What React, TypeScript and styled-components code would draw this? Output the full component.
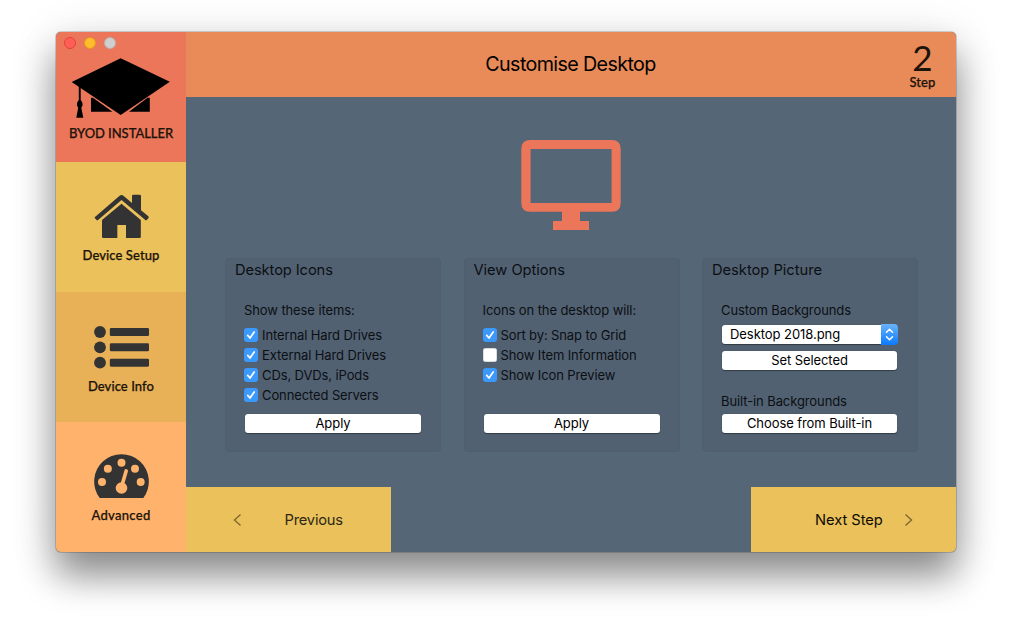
import React from "react";
import styled, { createGlobalStyle } from "styled-components";

const GlobalStyle = createGlobalStyle`
  * { box-sizing: border-box; }
  body { margin: 0; background: #fff; font-family: Inter, "Liberation Sans", sans-serif; color: #0b0f14; }
  button { font: inherit; color: inherit; border: 0; padding: 0; }
`;

const Desktop = styled.div`
  height: 632px;
  padding: 32px 56px 80px;
  overflow: hidden;
`;

const Window = styled.div`
  display: flex;
  width: 900px;
  height: 520px;
  border-radius: 5px;
  overflow: hidden;
  background: #556677;
  box-shadow: 0 0 0 1px rgba(0, 0, 0, 0.16), 0 24px 36px rgba(0, 0, 0, 0.4), 0 8px 50px rgba(0, 0, 0, 0.14);
`;

const Sidebar = styled.nav`
  display: flex;
  flex-direction: column;
  width: 130px;
`;

const Brand = styled.div`
  height: 130px;
  background: #eb765a;
`;

const Lights = styled.div`
  display: flex;
  gap: 8px;
  padding: 5px 0 0 8px;
  height: 26px;
`;

const Light = styled.span<{ $fill: string; $edge: string }>`
  width: 12px;
  height: 12px;
  border-radius: 50%;
  background: ${(p) => p.$fill};
  border: 1px solid ${(p) => p.$edge};
`;

const CapIcon = styled.svg`
  display: block;
  width: 100px;
  height: 62px;
  margin-left: 15px;
`;

const Futura = styled.div<{ $spacing: number }>`
  font-family: Lato, sans-serif;
  font-weight: 500;
  font-size: 13px;
  line-height: 16px;
  text-align: center;
  white-space: nowrap;
  color: #1c130a;
  -webkit-text-stroke: 0.25px #1c130a;
  letter-spacing: ${(p) => p.$spacing}px;
`;

const BrandName = styled(Futura)`
  margin-top: 5px;
`;

const NavItem = styled.div<{ $bg: string; $gap: number }>`
  height: 130px;
  padding-top: 32px;
  background: ${(p) => p.$bg};
  svg {
    display: block;
    width: 56px;
    height: 45px;
    margin: 0 0 ${(p) => p.$gap}px 38px;
    fill: #333;
  }
`;

const Main = styled.main`
  display: flex;
  flex-direction: column;
  width: 770px;
`;

const Header = styled.header`
  display: grid;
  grid-template-columns: 66px 1fr 67px;
  height: 65px;
  background: #e88b59;
`;

const Title = styled.h1`
  grid-column: 2;
  margin: 0;
  font-size: 19.7px;
  font-weight: 400;
  line-height: 64px;
  text-align: center;
  letter-spacing: -0.62px;
  color: #000;
`;

const Step = styled.div`
  padding-top: 10px;
`;

const StepNumber = styled.div`
  font-family: Lato, sans-serif;
  font-size: 35px;
  line-height: 30px;
  height: 32px;
  text-align: center;
  color: #1c130a;
`;

const Content = styled.section`
  height: 390px;
  padding: 43px 38px 0 39px;
`;

const MonitorIcon = styled.svg`
  display: block;
  width: 100px;
  height: 90px;
  margin: 0 auto 28px 296px;
  fill: #eb765a;
`;

const Panels = styled.div`
  display: flex;
  justify-content: space-between;
`;

const Panel = styled.div`
  width: 216px;
  height: 194px;
  padding: 0 19px;
  border: 1px solid #4f5f6f;
  border-radius: 4px;
  background: #526171;
`;

const PanelTitle = styled.h2<{ $spacing: number }>`
  margin: 1px 0 0 -10px;
  height: 40px;
  font-size: 14.7px;
  font-weight: 400;
  line-height: 20px;
  white-space: nowrap;
  letter-spacing: ${(p) => p.$spacing}px;
`;

const Caption = styled.div`
  font-size: 13px;
  line-height: 20px;
  margin-left: -1px;
  white-space: nowrap;
  letter-spacing: -0.1px;
`;

const Options = styled.div`
  height: 94px;
  padding-top: 5px;
`;

const Option = styled.label`
  display: flex;
  align-items: center;
  gap: 4px;
  height: 20px;
  margin-left: -1px;
`;

const OptionText = styled.span`
  font-size: 13px;
  line-height: 20px;
  white-space: nowrap;
  letter-spacing: -0.11px;
`;

const Box = styled.span<{ $on: boolean }>`
  display: block;
  width: 14px;
  height: 14px;
  border-radius: 3px;
  background: ${(p) => (p.$on ? "#3b99fc" : "#fff")};
  box-shadow: ${(p) => (p.$on ? "none" : "inset 0 0 0 0.5px #b5bac0")};
  svg { display: block; }
`;

const Button = styled.button<{ $width?: number }>`
  display: block;
  width: ${(p) => p.$width ?? 176}px;
  height: 19px;
  border-radius: 3px;
  background: #fff;
  color: #000;
  font-size: 13px;
  line-height: 19px;
  text-align: center;
  letter-spacing: -0.08px;
  box-shadow: 0 0.5px 1px rgba(0, 0, 0, 0.4);
`;

const PictureControls = styled.div`
  display: flex;
  flex-direction: column;
  padding-top: 4px;
  height: 71px;
`;

const Select = styled.div`
  display: flex;
  justify-content: space-between;
  align-items: center;
  width: 176px;
  height: 21px;
  margin-bottom: 6px;
`;

const SelectValue = styled.span`
  width: 159px;
  height: 19px;
  padding-left: 8px;
  border-radius: 3px 0 0 3px;
  background: #fff;
  color: #000;
  font-size: 13px;
  line-height: 19px;
  letter-spacing: -0.06px;
  box-shadow: 0 0.5px 1px rgba(0, 0, 0, 0.4);
`;

const SelectArrows = styled.span`
  width: 17px;
  height: 21px;
  border-radius: 0 4px 4px 0;
  background: linear-gradient(#6bb3fa, #0a7aff);
  svg { display: block; }
`;

const BuiltIn = styled.div`
  display: grid;
  gap: 3px;
`;

const Footer = styled.footer`
  display: flex;
  justify-content: space-between;
  height: 65px;
`;

const FooterButton = styled.button<{ $left: number; $gap: number; $color: string; $spacing: number }>`
  display: flex;
  align-items: center;
  gap: ${(p) => p.$gap}px;
  width: 205px;
  height: 65px;
  padding-left: ${(p) => p.$left}px;
  background: #eac15a;
  color: ${(p) => p.$color};
  font-size: 14.7px;
  letter-spacing: ${(p) => p.$spacing}px;
  svg { fill: none; stroke: #80692f; stroke-width: 1.4; }
`;

const Check = ({ label, on = true }: { label: string; on?: boolean }) => (
  <Option>
    <Box $on={on}>
      {on && (
        <svg width="14" height="14" viewBox="0 0 14 14" fill="none" stroke="#fff" strokeWidth="1.7" strokeLinecap="round" strokeLinejoin="round">
          <path d="M3.7 7.4 6 10 10.2 4" />
        </svg>
      )}
    </Box>
    <OptionText>{label}</OptionText>
  </Option>
);

export default function App() {
  return (
    <>
      <GlobalStyle />
      <Desktop>
        <Window>
          <Sidebar>
            <Brand>
              <Lights>
                <Light $fill="#ff5f57" $edge="#e2423d" />
                <Light $fill="#ffbd2e" $edge="#e09a1c" />
                <Light $fill="#cfcfcf" $edge="#b9b0ae" />
              </Lights>
              <CapIcon viewBox="71 58 100 62">
                <path d="M71.7 82 120.7 58.3 169.8 81.8 120.7 115z" />
                <path d="M91 97.7H93L112.4 111.7H91zM149.8 97.7H147.5L129 111.7H149.8z" />
                <path d="M78.8 85H80.7V100Q82.6 102 82.6 104.2 82.6 106.5 81.3 107.8L83.3 117.8H76.3L78.2 107.8Q76.9 106.5 76.9 104.2 76.9 102 78.8 100z" />
              </CapIcon>
              <BrandName $spacing={-0.05}>BYOD INSTALLER</BrandName>
            </Brand>
            <NavItem $bg="#eac15a" $gap={8}>
              <svg viewBox="132 102 168 135">
                <path d="M135 171 208 108Q214.500 102 221 108L246 129V108Q246 104 250 104H269Q273 104 273 108V151L295 169Q298 172 295 175L291 179Q288 182 285 179L214.500 120 145 179Q142 182 139 179L135 175Q132 173 135 171z" />
                <path d="M214.500 131 272.500 180V230Q272.500 234 268 234H228V195H202V234H160Q156 234 156 230V180z" />
              </svg>
              <Futura $spacing={0.08}>Device Setup</Futura>
            </NavItem>
            <NavItem $bg="#e8b158" $gap={9}>
              <svg viewBox="132 102 168 135">
                {[126, 172, 218].map((y) => (
                  <g key={y}>
                    <circle cx="150" cy={y} r="17.700" />
                    <rect x="179.500" y={y - 12} width="117.500" height="24" rx="4" />
                  </g>
                ))}
              </svg>
              <Futura $spacing={0.08}>Device Info</Futura>
            </NavItem>
            <NavItem $bg="#ffb26c" $gap={8}>
              <svg viewBox="132 102 168 135">
                <path d="M149 234A82 82 0 1 1 280 234z" />
                <g fill="#ffb26c">
                  <circle cx="156" cy="186" r="12" />
                  <circle cx="173.500" cy="146" r="12" />
                  <circle cx="214.500" cy="128.500" r="12" />
                  <circle cx="255" cy="146" r="12" />
                  <circle cx="272" cy="186" r="12" />
                  <circle cx="214.500" cy="204" r="17.500" />
                </g>
                <path d="M216 196 228.500 153" stroke="#ffb26c" strokeWidth="11" strokeLinecap="round" />
              </svg>
              <Futura $spacing={0.3}>Advanced</Futura>
            </NavItem>
          </Sidebar>
          <Main>
            <Header>
              <Title>Customise Desktop</Title>
              <Step>
                <StepNumber>2</StepNumber>
                <Futura $spacing={0.1}>Step</Futura>
              </Step>
            </Header>
            <Content>
              <MonitorIcon viewBox="0 0 100 90">
                <path fillRule="evenodd" d="M9.300 0H90.700Q99.700 0 99.700 9V62.700Q99.700 71.700 90.700 71.700H59V81H68V90H32V81H41V71.700H9.300Q.300 71.700 .300 62.700V9Q.300 0 9.300 0zM9.600 9V63H90.600V9z" />
              </MonitorIcon>
              <Panels>
                <Panel>
                  <PanelTitle $spacing={-0.1}>Desktop Icons</PanelTitle>
                  <Caption>Show these items:</Caption>
                  <Options>
                    <Check label="Internal Hard Drives" />
                    <Check label="External Hard Drives" />
                    <Check label="CDs, DVDs, iPods" />
                    <Check label="Connected Servers" />
                  </Options>
                  <Button>Apply</Button>
                </Panel>
                <Panel>
                  <PanelTitle $spacing={-0.05}>View Options</PanelTitle>
                  <Caption>Icons on the desktop will:</Caption>
                  <Options>
                    <Check label="Sort by: Snap to Grid" />
                    <Check label="Show Item Information" on={false} />
                    <Check label="Show Icon Preview" />
                  </Options>
                  <Button>Apply</Button>
                </Panel>
                <Panel>
                  <PanelTitle $spacing={-0.02}>Desktop Picture</PanelTitle>
                  <Caption>Custom Backgrounds</Caption>
                  <PictureControls>
                    <Select>
                      <SelectValue>Desktop 2018.png</SelectValue>
                      <SelectArrows>
                        <svg width="17" height="21" viewBox="0 0 17 21" fill="none" stroke="#fff" strokeWidth="1.500" strokeLinecap="round" strokeLinejoin="round">
                          <path d="M5.500 8.300 8.500 5.300 11.500 8.300M5.500 12.700 8.500 15.700 11.500 12.700" />
                        </svg>
                      </SelectArrows>
                    </Select>
                    <Button $width={175}>Set Selected</Button>
                  </PictureControls>
                  <BuiltIn>
                    <Caption>Built-in Backgrounds</Caption>
                    <Button $width={175}>Choose from Built-in</Button>
                  </BuiltIn>
                </Panel>
              </Panels>
            </Content>
            <Footer>
              <FooterButton $left={47} $gap={42.5} $color="#2f2814" $spacing={-0.2}>
                <svg width="9" height="14" viewBox="0 0 9 14"><path d="M7.500 1.500 1.500 7 7.500 12.500" /></svg>
                <span>Previous</span>
              </FooterButton>
              <FooterButton $left={64} $gap={21} $color="#0d0b06" $spacing={-0.05}>
                <span>Next Step</span>
                <svg width="9" height="14" viewBox="0 0 9 14"><path d="M1.500 1.500 7.500 7 1.500 12.500" /></svg>
              </FooterButton>
            </Footer>
          </Main>
        </Window>
      </Desktop>
    </>
  );
}
